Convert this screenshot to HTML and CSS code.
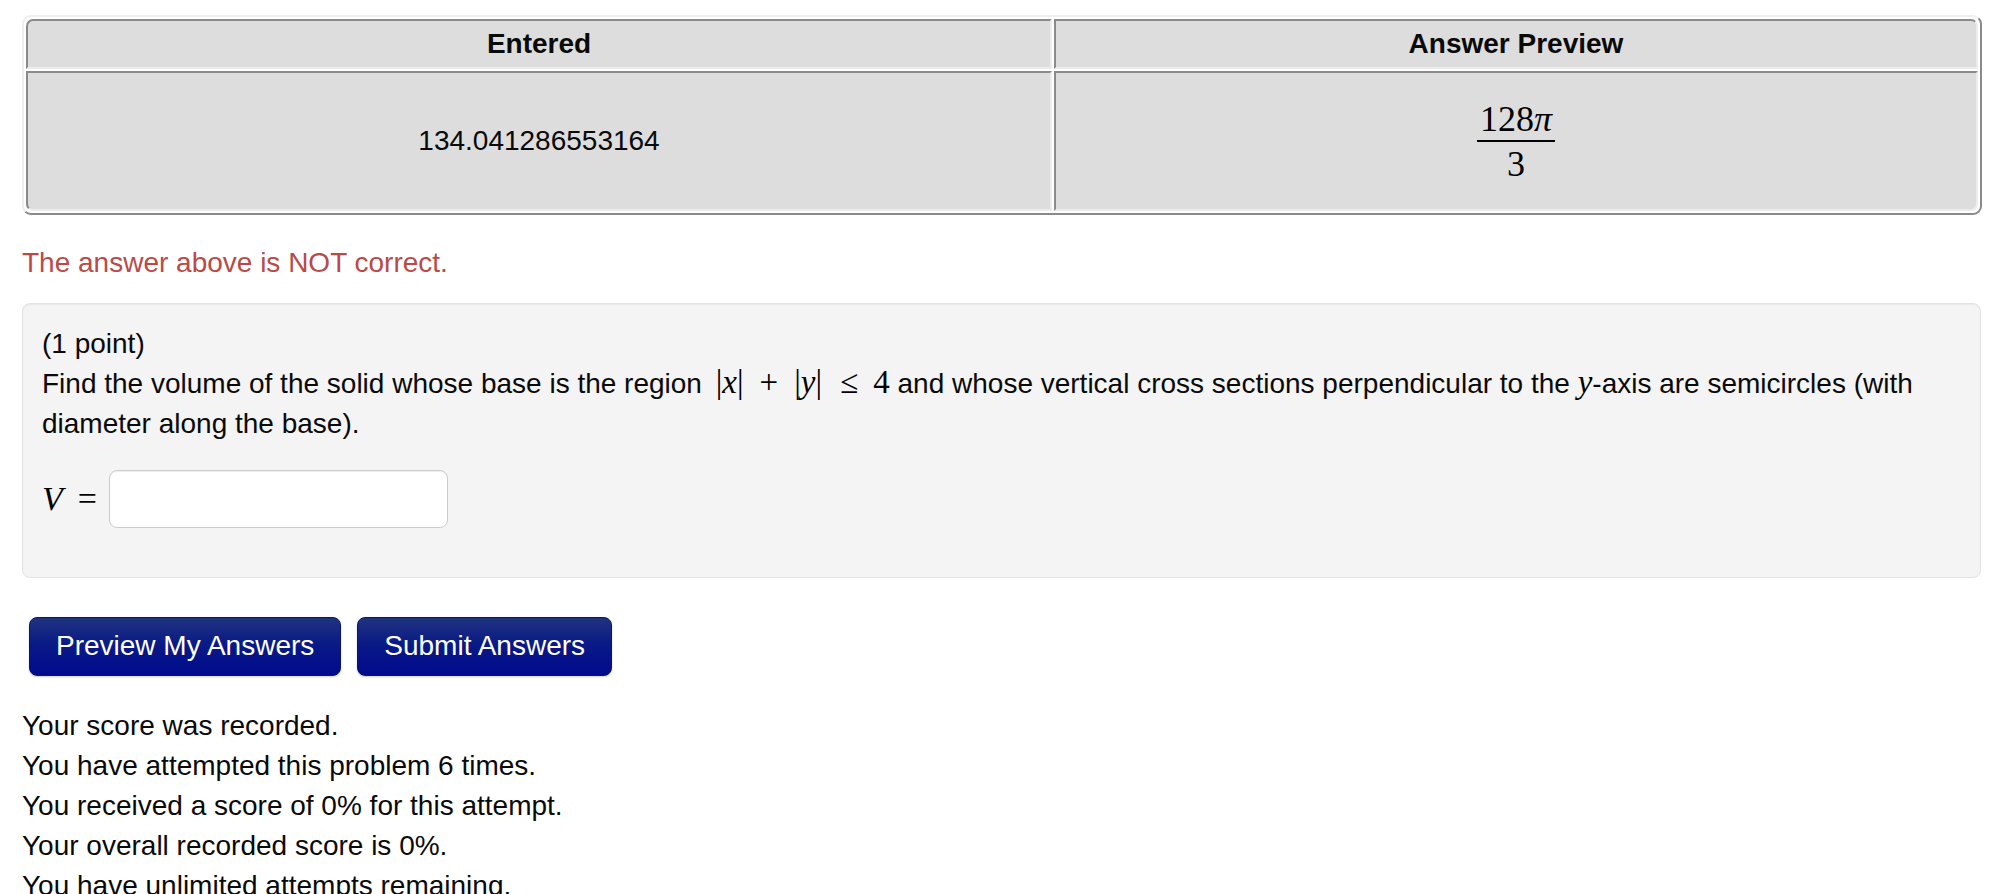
FILE: index.html
```html
<!DOCTYPE html>
<html lang="en">
<head>
<meta charset="utf-8">
<title>Problem</title>
<link rel="stylesheet" href="styles.css">
</head>
<body>
<div class="page">
  <table class="results">
    <thead>
      <tr><th class="col-entered">Entered</th><th class="col-preview">Answer Preview</th></tr>
    </thead>
    <tbody>
      <tr>
        <td class="col-entered">134.041286553164</td>
        <td class="col-preview"><span class="frac"><span class="num">128<i>π</i></span><span class="den">3</span></span></td>
      </tr>
    </tbody>
  </table>

  <div class="feedback">The answer above is NOT correct.</div>

  <div class="well">
    <p class="problem">(1 point)<br>Find the volume of the solid whose base is the region <span class="math expr"><span class="abs">|<i>x</i>|</span><span class="bin">+</span><span class="abs">|<i>y</i>|</span><span class="rel">≤</span><span class="num4">4</span></span> and whose vertical cross sections perpendicular to the <span class="math"><i>y</i></span>-axis are semicircles (with diameter along the base).</p>
    <div class="answer-row">
      <span class="mvar">V</span><span class="meq">=</span><input class="answer" type="text" aria-label="V">
    </div>
  </div>

  <div class="buttons">
    <button class="btn" type="button">Preview My Answers</button>
    <button class="btn" type="button">Submit Answers</button>
  </div>

  <div class="score">
    <div>Your score was recorded.</div>
    <div>You have attempted this problem 6 times.</div>
    <div>You received a score of 0% for this attempt.</div>
    <div>Your overall recorded score is 0%.</div>
    <div>You have unlimited attempts remaining.</div>
  </div>
</div>
</body>
</html>
```

FILE: styles.css
```css
html, body {
  margin: 0;
  padding: 0;
  background: #fff;
}

body {
  font-family: "Liberation Sans", Arial, Helvetica, sans-serif;
  font-size: 28px;
  line-height: 40px;
  color: #0a0a0a;
}

.page {
  width: 1960px;
  padding: 15px 0 0 22px;
}

/* results table */
.results {
  width: 1960px;
  border-collapse: separate;
  border-spacing: 2px;
  border: 2px solid;
  border-color: #efefef #8a8a8a #8a8a8a #efefef;
  border-radius: 9px;
  background: #fff;
}

.results th,
.results td {
  box-sizing: border-box;
  background: #dddddd;
  border: 2px solid;
  border-color: #8a8a8a #ececec #ececec #8a8a8a;
  text-align: center;
  vertical-align: middle;
}

.results th {
  font-weight: bold;
  padding: 3px 8px;
  line-height: 40px;
}

.results td {
  height: 140px;
  padding: 0 8px;
}

.results .col-entered {
  width: 1026px;
}

.results thead th.col-entered { border-top-left-radius: 7px; }
.results thead th.col-preview { border-top-right-radius: 7px; }
.results tbody td.col-entered { border-bottom-left-radius: 7px; }
.results tbody td.col-preview { border-bottom-right-radius: 7px; }

.frac {
  display: inline-flex;
  flex-direction: column;
  align-items: center;
  vertical-align: middle;
  font-family: "Liberation Serif", "Times New Roman", serif;
  font-size: 36px;
  line-height: 36px;
  color: #000;
}

.frac .num {
  padding: 0 3px 3px;
  border-bottom: 2px solid #000;
}

.frac .den {
  padding-top: 4px;
}

/* feedback */
.feedback {
  margin-top: 28px;
  color: #b94a48;
}

/* problem well */
.well {
  box-sizing: border-box;
  width: 1959px;
  margin-top: 20px;
  padding: 20px 19px 49px;
  background: #f4f4f4;
  border: 1px solid #e3e3e3;
  border-radius: 8px;
  box-shadow: inset 0 1px 1px rgba(0, 0, 0, 0.05);
}

.problem {
  margin: 0;
}

.math {
  font-family: "Liberation Serif", "Times New Roman", serif;
  font-size: 33px;
  line-height: 30px;
  color: #000;
}

.expr {
  margin-left: 6px;
}

.math i {
  font-style: italic;
}

.abs {
  display: inline-block;
}

.bin {
  display: inline-block;
  margin: 0 16px;
}

.rel {
  display: inline-block;
  margin: 0 15px 0 18px;
}

.num4 {
  display: inline-block;
}

.answer-row {
  display: flex;
  align-items: center;
  margin-top: 26px;
  font-family: "Liberation Serif", "Times New Roman", serif;
  font-size: 34px;
  color: #000;
}

.mvar {
  font-style: italic;
}

.meq {
  margin-left: 15px;
  margin-right: 12px;
}

.answer {
  box-sizing: border-box;
  width: 339px;
  height: 58px;
  margin: 0;
  padding: 4px 12px;
  background: #fff;
  border: 1px solid #cccccc;
  border-radius: 8px;
  box-shadow: inset 0 1px 1px rgba(0, 0, 0, 0.075);
  font-family: "Liberation Sans", Arial, sans-serif;
  font-size: 28px;
}

/* buttons */
.buttons {
  display: flex;
  gap: 16px;
  margin: 39px 0 0 7px;
}

.btn {
  box-sizing: border-box;
  margin: 0;
  padding: 8px 26px 9px;
  border: 1px solid #0b1665;
  border-radius: 8px;
  background: linear-gradient(to bottom, #20337f 0%, #0a1a86 45%, #000a8e 100%);
  color: #fff;
  font-family: "Liberation Sans", Arial, Helvetica, sans-serif;
  font-size: 28px;
  line-height: 40px;
  box-shadow: 0 1px 2px rgba(0, 0, 0, 0.2);
  cursor: pointer;
}

/* score */
.score {
  margin-top: 30px;
}
```
